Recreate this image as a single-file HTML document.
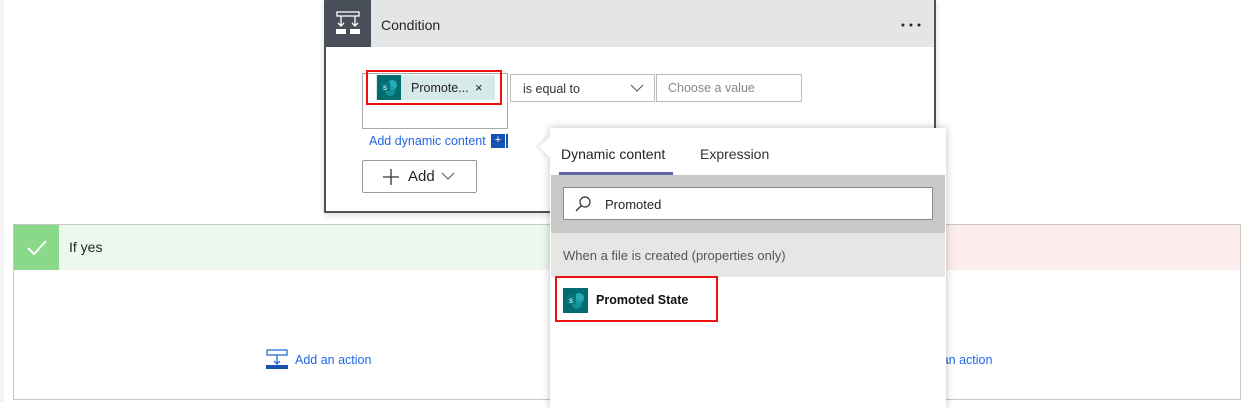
<!DOCTYPE html>
<html><head><style>
*{box-sizing:border-box;margin:0;padding:0}
body{width:1248px;height:402px;position:relative;overflow:hidden;background:#fff;font-family:"Segoe UI","Liberation Sans",sans-serif;color:#252423}
.a{position:absolute}
.sp{background:#036c70;}
</style></head><body>
<div class="a" style="left:0;top:0;width:4px;height:402px;background:#f4f4f4"></div>
<!-- branches -->
<div class="a" style="left:13px;top:224px;width:1228px;height:176px;border:1px solid #c8c8c8"></div>
<div class="a" style="left:14px;top:225px;width:560px;height:45px;background:#ecf7ee"></div>
<div class="a" style="left:14px;top:225px;width:45px;height:45px;background:#8ad98a">
<svg width="45" height="45"><path d="M14 23 L20 29 L32 16" stroke="#fff" stroke-width="2" fill="none"/></svg></div>
<div class="a" style="left:69px;top:239px;font-size:14px">If yes</div>
<div class="a" style="left:900px;top:225px;width:340px;height:45px;background:#fdecec"></div>
<svg class="a" style="left:266px;top:349px" width="24" height="22"><rect x="1" y="1" width="20" height="5" fill="none" stroke="#1a62c8" stroke-width="1.2"/><path d="M11 6 V15 M8 12 L11 15 L14 12" stroke="#1a62c8" fill="none" stroke-width="1.2"/><rect x="0" y="16" width="22" height="4" fill="#1553b0"/></svg>
<div class="a" style="left:295px;top:353px;font-size:12.5px;color:#2266e3">Add an action</div>
<div class="a" style="left:916px;top:353px;font-size:12.5px;color:#2266e3">Add an action</div>
<!-- condition card -->
<div class="a" style="left:324px;top:0;width:612px;height:213px;border:2px solid #4b525a;border-top:none;background:#fff;box-shadow:0 2px 6px rgba(0,0,0,.15)"></div>
<div class="a" style="left:326px;top:0;width:608px;height:47px;background:#e4e5e6"></div>
<div class="a" style="left:326px;top:0;width:45px;height:47px;background:#484f58">
<svg width="45" height="47"><g stroke="#fff" stroke-width="1.3" fill="none"><rect x="11" y="12" width="22" height="4"/><path d="M15 16 V26 M29 16 V26 M12 23 L15 26 L18 23 M26 23 L29 26 L32 23"/></g><rect x="10" y="29" width="10" height="5" fill="#fff"/><rect x="24" y="29" width="10" height="5" fill="#fff"/></svg></div>
<div class="a" style="left:381px;top:17px;font-size:14px">Condition</div>
<svg class="a" style="left:900px;top:22px" width="24" height="6"><circle cx="3" cy="3" r="1.5" fill="#222"/><circle cx="11" cy="3" r="1.5" fill="#222"/><circle cx="19" cy="3" r="1.5" fill="#222"/></svg>
<div class="a" style="left:362px;top:73px;width:146px;height:56px;border:1px solid #aaa"></div>
<div class="a" style="left:376px;top:75px;width:119px;height:25px;background:#d6eaea"></div>
<div class="a sp" style="left:377px;top:75px;width:24px;height:25px"><svg width="24" height="25"><circle cx="15" cy="10" r="5" fill="#37c6d0" opacity=".7"/><circle cx="13" cy="16" r="5" fill="#1a9ba1" opacity=".8"/><rect x="4" y="7" width="9" height="9" fill="#03787c"/><text x="6" y="15" font-size="8" fill="#fff" font-family="Liberation Sans">s</text></svg></div>
<div class="a" style="left:411px;top:81px;font-size:12.5px">Promote...</div>
<div class="a" style="left:475px;top:80px;font-size:13px">×</div>
<div class="a" style="left:366px;top:70px;width:136px;height:35px;border:2px solid #e11"></div>
<div class="a" style="left:510px;top:74px;width:145px;height:28px;border:1px solid #bbb;font-size:12.5px;padding:7px 12px;color:#333">is equal to</div>
<svg class="a" style="left:630px;top:84px" width="14" height="9"><path d="M1 1 L7 7 L13 1" stroke="#555" fill="none"/></svg>
<div class="a" style="left:656px;top:74px;width:146px;height:28px;border:1px solid #bbb;font-size:12.5px;padding:6px 11px;color:#888">Choose a value</div>
<div class="a" style="left:369px;top:134px;font-size:12.5px;color:#2266e3">Add dynamic content</div>
<div class="a" style="left:491px;top:134px;width:14px;height:14px;background:#1553b0;color:#fff;font-size:11px;line-height:13px;text-align:center">+</div>
<div class="a" style="left:506px;top:134px;width:2px;height:14px;background:#1553b0"></div>
<div class="a" style="left:362px;top:160px;width:115px;height:33px;border:1px solid #999;border-radius:2px"></div>
<svg class="a" style="left:382px;top:168px" width="18" height="18"><path d="M9 1 V17 M1 9 H17" stroke="#333" stroke-width="1.3"/></svg>
<div class="a" style="left:408px;top:168px;font-size:15px">Add</div>
<svg class="a" style="left:441px;top:172px" width="14" height="9"><path d="M1 1 L7 7 L13 1" stroke="#555" fill="none"/></svg>
<!-- popup -->
<div class="a" style="left:550px;top:128px;width:396px;height:280px;background:#fff;box-shadow:0 0 8px rgba(0,0,0,.25)"></div>
<div class="a" style="left:542px;top:140px;width:14px;height:14px;background:#fff;transform:rotate(45deg);box-shadow:-2px 2px 3px rgba(0,0,0,.1)"></div>
<div class="a" style="left:551px;top:130px;width:20px;height:40px;background:#fff"></div>
<div class="a" style="left:561px;top:146px;font-size:14px">Dynamic content</div>
<div class="a" style="left:700px;top:146px;font-size:14px;color:#333">Expression</div>
<div class="a" style="left:559px;top:172px;width:114px;height:3px;background:#6264a7"></div>
<div class="a" style="left:551px;top:175px;width:394px;height:58px;background:#c8c9c7"></div>
<div class="a" style="left:563px;top:187px;width:370px;height:33px;background:#fff;border:1px solid #888;border-radius:2px"></div>
<svg class="a" style="left:574px;top:195px" width="18" height="18"><circle cx="11" cy="7" r="5" stroke="#333" fill="none" stroke-width="1.2"/><path d="M7.5 10.5 L2 16" stroke="#333" stroke-width="1.3"/></svg>
<div class="a" style="left:605px;top:197px;font-size:13px">Promoted</div>
<div class="a" style="left:551px;top:233px;width:394px;height:44px;background:#e6e7e5"></div>
<div class="a" style="left:563px;top:248px;font-size:13px;color:#555">When a file is created (properties only)</div>
<div class="a sp" style="left:563px;top:288px;width:25px;height:25px"><svg width="25" height="25"><circle cx="16" cy="10" r="5" fill="#37c6d0" opacity=".7"/><circle cx="14" cy="16" r="5" fill="#1a9ba1" opacity=".8"/><rect x="4" y="7" width="9" height="9" fill="#03787c"/><text x="6" y="15" font-size="8" fill="#fff" font-family="Liberation Sans">s</text></svg></div>
<div class="a" style="left:596px;top:293px;font-size:12.5px;font-weight:bold;color:#111">Promoted State</div>
<div class="a" style="left:555px;top:276px;width:163px;height:46px;border:2px solid #e11"></div>
</body></html>
